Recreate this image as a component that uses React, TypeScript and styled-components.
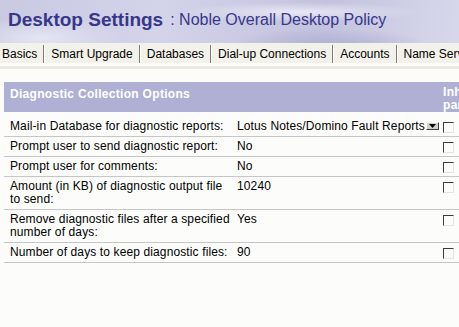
import styled, { createGlobalStyle } from "styled-components";

const GlobalStyle = createGlobalStyle`
  html, body {
    margin: 0;
    padding: 0;
    background: #fcfdfa;
    overflow: hidden;
  }
  body {
    font-family: "Liberation Sans", Arial, sans-serif;
    font-size: 12px;
    color: #000;
  }
`;

const Page = styled.div`
  width: 459px;
  height: 327px;
  overflow: hidden;
  background: #fcfdfa;
`;

const Banner = styled.div`
  height: 43px;
  display: flex;
  align-items: center;
  padding: 0 0 3px 8px;
  box-sizing: border-box;
  white-space: nowrap;
  background:
    radial-gradient(ellipse 140px 22px at 330px 44px, rgba(175, 175, 210, 0.9), rgba(175, 175, 210, 0) 70%),
    radial-gradient(ellipse 170px 14px at 300px 12px, rgba(238, 238, 248, 0.85), rgba(238, 238, 248, 0) 70%),
    radial-gradient(ellipse 120px 30px at 40px 38px, rgba(235, 235, 246, 0.8), rgba(235, 235, 246, 0) 70%),
    linear-gradient(100deg, #c9c9e2 0%, #d3d3ea 35%, #c2c2de 70%, #d8d8ec 100%);
`;

const Title = styled.span`
  font-family: "Liberation Sans", Arial, sans-serif;
  font-weight: bold;
  font-size: 19px;
  color: #37378a;
`;

const Subtitle = styled.span`
  font-family: "Liberation Sans", Arial, sans-serif;
  font-size: 16px;
  color: #37378a;
  margin-left: 7px;
`;

const TabBar = styled.div`
  display: flex;
  height: 20px;
  align-items: stretch;
  background: #f3f2ea;
  border-bottom: 3px solid #fcfdfa;
  box-shadow: 0 3px 0 #eceade;
  white-space: nowrap;
  overflow: hidden;
`;

const Tab = styled.div<{ $first?: boolean }>`
  display: flex;
  align-items: center;
  padding: 0 6px 0 ${(p) => (p.$first ? "2px" : "6px")};
  border-right: 1px solid #7c7a72;
  box-shadow: 1px 0 0 #ffffff;
  margin-right: 1px;
  margin-top: 2px;
`;

const Section = styled.div`
  margin-top: 16px;
  margin-left: 4px;
  width: 500px;
`;

const SectionHead = styled.div`
  display: grid;
  grid-template-columns: 232px 205px 1fr;
  height: 30px;
  background: #b0b0d5;
  color: #ffffff;
  font-weight: bold;
  font-size: 12px;
  letter-spacing: 0.3px;
`;

const HeadTitle = styled.div`
  padding: 5px 0 0 6px;
  white-space: nowrap;
`;

const HeadInherit = styled.div`
  grid-column: 3;
  padding: 4px 0 0 2px;
  line-height: 13px;
  white-space: nowrap;
`;

const Rows = styled.div`
  margin-top: 5px;
  width: 455px;
`;

const Row = styled.div`
  display: grid;
  grid-template-columns: 232px 205px 1fr;
  border-bottom: 1px solid #c6c6c6;
  line-height: 13px;
  padding: 3px 0 3px;
  letter-spacing: 0.12px;
`;

const Label = styled.div`
  padding-left: 6px;
  padding-right: 6px;
`;

const Value = styled.div`
  padding-left: 1px;
  display: flex;
  align-items: flex-start;
  white-space: nowrap;
`;

const DropButton = styled.span`
  display: inline-flex;
  align-items: center;
  justify-content: center;
  width: 13px;
  height: 8px;
  margin: 2px 0 0 1px;
  background: #d4d0c8;
  border: 1px solid;
  border-color: #ffffff #404040 #404040 #ffffff;
  box-sizing: border-box;
`;

const Check = styled.span`
  display: block;
  width: 11px;
  height: 11px;
  margin: 2px 0 0 2px;
  box-sizing: border-box;
  border: 1px solid;
  border-color: #3c3c3c #e4e4e0 #e4e4e0 #3c3c3c;
  background: #fcfdfa;
`;

const rows: { label: string; value: string; drop?: boolean }[] = [
  { label: "Mail-in Database for diagnostic reports:", value: "Lotus Notes/Domino Fault Reports", drop: true },
  { label: "Prompt user to send diagnostic report:", value: "No" },
  { label: "Prompt user for comments:", value: "No" },
  { label: "Amount (in KB) of diagnostic output file to send:", value: "10240" },
  { label: "Remove diagnostic files after a specified number of days:", value: "Yes" },
  { label: "Number of days to keep diagnostic files:", value: "90" },
];

const tabs = ["Basics", "Smart Upgrade", "Databases", "Dial-up Connections", "Accounts", "Name Servers"];

export default function App() {
  return (
    <>
      <GlobalStyle />
      <Page>
        <Banner>
          <Title>Desktop Settings</Title>
          <Subtitle>: Noble Overall Desktop Policy</Subtitle>
        </Banner>
        <TabBar>
          {tabs.map((t, i) => (
            <Tab key={t} $first={i === 0}>
              {t}
            </Tab>
          ))}
        </TabBar>
        <Section>
          <SectionHead>
            <HeadTitle>Diagnostic Collection Options</HeadTitle>
            <HeadInherit>
              Inherit
              <br />
              parent
            </HeadInherit>
          </SectionHead>
          <Rows>
            {rows.map((r) => (
              <Row key={r.label}>
                <Label>{r.label}</Label>
                <Value>
                  {r.value}
                  {r.drop && (
                    <DropButton>
                      <svg width="7" height="4" viewBox="0 0 7 4">
                        <path d="M0 0h7L3.5 4z" fill="#000" />
                      </svg>
                    </DropButton>
                  )}
                </Value>
                <div>
                  <Check />
                </div>
              </Row>
            ))}
          </Rows>
        </Section>
      </Page>
    </>
  );
}
